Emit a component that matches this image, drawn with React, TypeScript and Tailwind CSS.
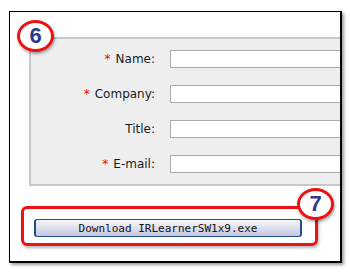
const fields = [
  { label: 'Name:', required: true },
  { label: 'Company:', required: true },
  { label: 'Title:', required: false },
  { label: 'E-mail:', required: true },
];

function Badge({ n }: { n: string }) {
  return (
    <div className="w-[37px] h-[32px] rounded-[50%] border-[3px] border-[#ee1111] bg-white shadow-[1px_2px_3px_rgba(0,0,0,0.35)] flex items-center justify-center">
      <span className="font-['Liberation_Sans',Arial,sans-serif] font-bold text-[22px] leading-none text-[#2e3a8c]">{n}</span>
    </div>
  );
}

export default function App() {
  return (
    <div className="w-[350px] h-[275px] bg-white pt-[11px] pl-[9px] overflow-hidden">
      <div className="relative w-[333px] h-[252px] bg-white border border-black border-r-2 border-b-2 shadow-[2px_2px_3px_rgba(0,0,0,0.4)] overflow-hidden font-['DejaVu_Sans',Verdana,sans-serif]">
        {/* Form panel */}
        <div className="ml-[19px] mt-[25px] w-[400px] h-[149px] border-2 border-[#c8c8c8] bg-[#eeeeee] pt-[11px] flex flex-col gap-[17px]">
          {fields.map((f) => (
            <div key={f.label} className="flex items-center h-[18px]">
              <label className="w-[124px] text-right text-[12px] text-[#1a1a1a] whitespace-nowrap">
                {f.required && <span className="text-[#ee0000] mr-[5px]">*</span>}
                {f.label}
              </label>
              <input className="ml-[15px] h-[18px] w-[240px] bg-white border border-[#a5acb2] outline-none" />
            </div>
          ))}
        </div>

        {/* Download button */}
        <button className="ml-[24px] mt-[33px] w-[268px] h-[18px] rounded-[3px] border border-[#1d4f86] border-x-2 bg-gradient-to-b from-[#f8f8fc] to-[#c4c6e0] font-['DejaVu_Sans_Mono','Liberation_Mono',monospace] text-[11px] leading-none text-[#111] flex items-center justify-center">
          Download IRLearnerSW1x9.exe
        </button>

        {/* Annotations */}
        <div className="absolute left-[7px] top-[8px]">
          <Badge n="6" />
        </div>
        <div className="absolute left-[11px] top-[194px] w-[297px] h-[40px] rounded-[6px] border-[3px] border-[#ee1111] shadow-[1px_2px_3px_rgba(0,0,0,0.3)]" />
        <div className="absolute left-[287px] top-[176px]">
          <Badge n="7" />
        </div>
      </div>
    </div>
  );
}
